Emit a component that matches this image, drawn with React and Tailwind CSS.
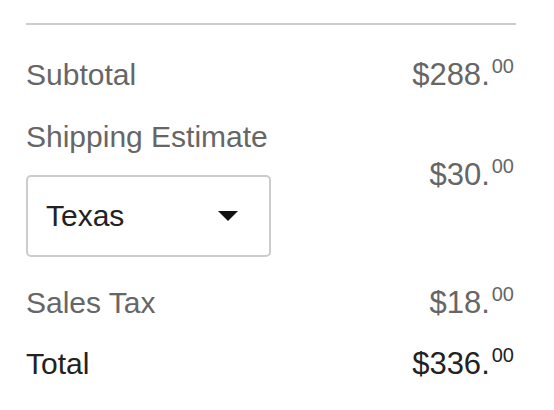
import { useState } from "react";

function Price({ dollars, cents, dark }) {
  return (
    <div className={`flex items-start pr-[2px] ${dark ? "text-[#222]" : "text-[#666]"}`}>
      <span className="text-[31px] leading-[36px]">${dollars}.</span>
      <span className="text-[20px] leading-[20px] -mt-[1px] ml-[2px]">{cents}</span>
    </div>
  );
}

export default function App() {
  const [state] = useState("Texas");

  return (
    <div className="w-[516px] pl-[26px] pt-[23px] text-[30px] bg-white font-['Liberation_Sans',Arial,sans-serif]">
      <div className="h-[2px] bg-[#cccccc]" />

      <div className="mt-[32px] flex justify-between text-[#666]">
        <span className="leading-[36px]">Subtotal</span>
        <Price dollars="288" cents="00" />
      </div>

      <div className="mt-[26px] flex justify-between">
        <div>
          <div className="leading-[36px] text-[#666]">Shipping Estimate</div>
          <button
            type="button"
            className="mt-[20px] w-[245px] h-[82px] border-2 border-[#cccccc] rounded-[5px] flex items-center justify-between pl-[18px] pr-[31px] text-[#222] bg-white"
          >
            <span className="leading-[36px]">{state}</span>
            <svg width="20" height="10" viewBox="0 0 20 10">
              <path d="M0 0h20L10 10z" fill="#111" />
            </svg>
          </button>
        </div>
        <div className="mt-[38px]">
          <Price dollars="30" cents="00" />
        </div>
      </div>

      <div className="mt-[28px] flex justify-between text-[#666]">
        <span className="leading-[36px]">Sales Tax</span>
        <Price dollars="18" cents="00" />
      </div>

      <div className="mt-[25px] flex justify-between text-[#222]">
        <span className="leading-[36px]">Total</span>
        <Price dollars="336" cents="00" dark />
      </div>
    </div>
  );
}
